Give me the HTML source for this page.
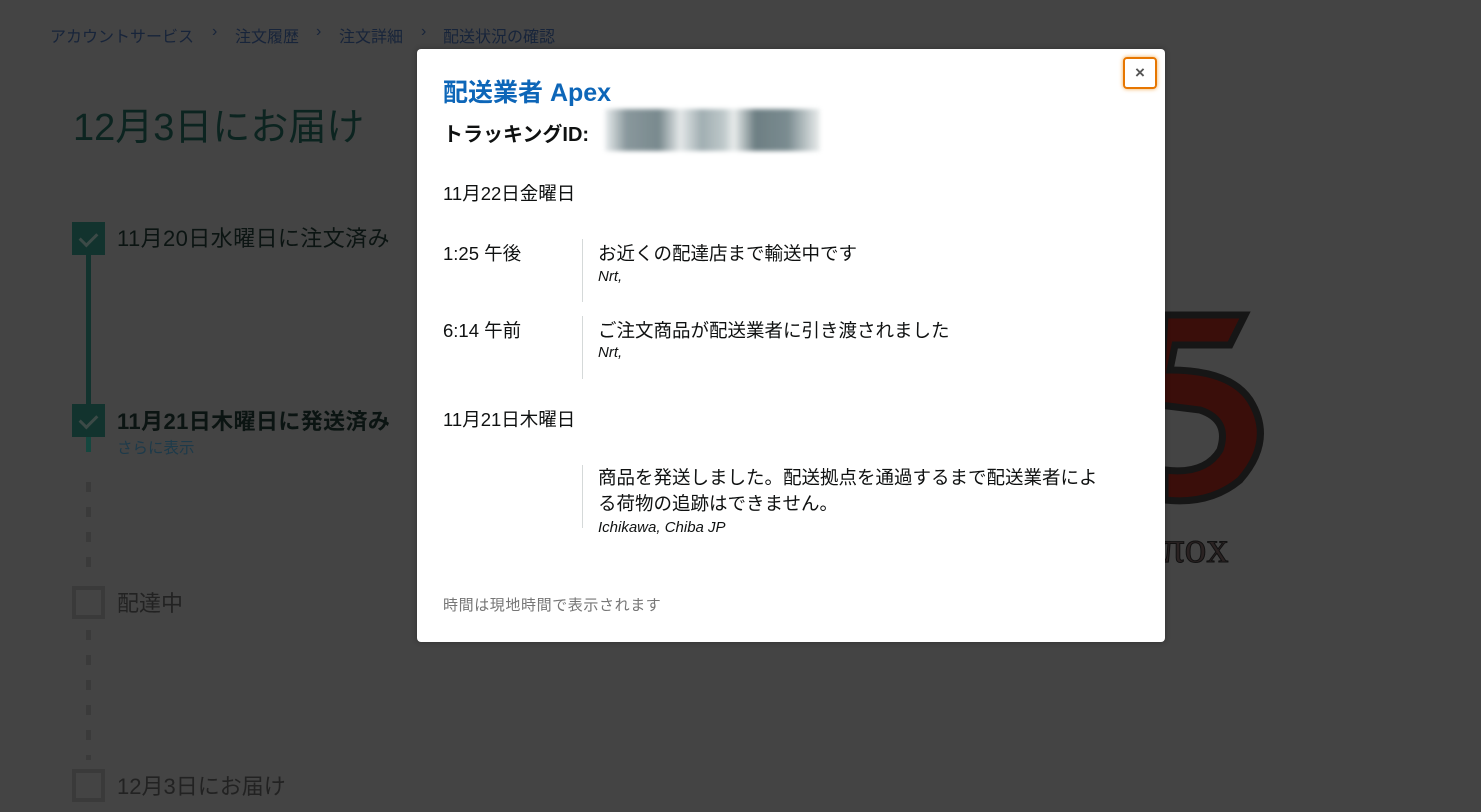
<!DOCTYPE html>
<html><head><meta charset="utf-8"><style>
*{margin:0;padding:0;box-sizing:border-box}
body{width:1481px;height:812px;overflow:hidden;background:#444;font-family:"Liberation Sans","Noto Sans CJK JP",sans-serif;position:relative;color:#111}
.a{position:absolute;white-space:nowrap}
.bc{top:23px;font-size:16px;color:#17243a}
.chk{position:absolute;left:72px;width:33px;height:33px;background:#12332e}
.chk:after{content:"";position:absolute;left:11px;top:7px;width:8px;height:14px;border:solid #3c4a47;border-width:0 3px 3px 0;transform:rotate(45deg)}
.emp{position:absolute;left:72px;width:33px;height:33px;border:4px solid #3a3a3a}
.dash{position:absolute;left:86px;width:5px;background:repeating-linear-gradient(#3a3a3a 0 10px,transparent 10px 25px)}
.modal{position:absolute;left:417px;top:49px;width:748px;height:593px;background:#fff;border-radius:4px;box-shadow:0 0 6px rgba(0,0,0,.3)}
.m{position:absolute;white-space:nowrap;color:#0f1111}
.vl{position:absolute;left:165px;width:1px;background:#d5d9d9}
.it{font-style:italic;font-size:15px}
.b{font-size:18.5px}
</style></head><body>
<div class="a bc" style="left:50px">アカウントサービス</div>
<div class="a bc" style="left:212px">›</div>
<div class="a bc" style="left:235px">注文履歴</div>
<div class="a bc" style="left:316px">›</div>
<div class="a bc" style="left:339px">注文詳細</div>
<div class="a bc" style="left:421px">›</div>
<div class="a bc" style="left:443px">配送状況の確認</div>
<div class="a" style="left:73px;top:96px;font-size:38px;color:#0c2420">12月3日にお届け</div>
<div style="position:absolute;left:86px;top:250px;width:5px;height:170px;background:#12332e"></div>
<div style="position:absolute;left:86px;top:436px;width:5px;height:16px;background:#15473f"></div>
<div class="chk" style="top:222px"></div>
<div class="chk" style="top:404px"></div>
<div class="a" style="left:117px;top:221px;font-size:22px;letter-spacing:.4px;color:#0b1412">11月20日水曜日に注文済み</div>
<div class="a" style="left:117px;top:404px;font-size:22px;letter-spacing:.4px;font-weight:bold;color:#0b1412">11月21日木曜日に発送済み</div>
<div class="a" style="left:117px;top:436px;font-size:15.5px;color:#1d3a4a">さらに表示</div>
<div class="dash" style="top:482px;height:95px"></div>
<div class="emp" style="top:586px"></div>
<div class="a" style="left:117px;top:586px;font-size:22px;color:#222">配達中</div>
<div class="dash" style="top:630px;height:130px"></div>
<div class="emp" style="top:769px"></div>
<div class="a" style="left:117px;top:769px;font-size:22px;color:#222">12月3日にお届け</div>
<svg style="position:absolute;left:1150px;top:300px" width="180" height="290" viewBox="0 0 180 290">
<path d="M15 15 L95 15 L80 45 L25 45 L20 70 Q80 70 100 100 Q125 140 90 180 Q60 205 15 200 L15 170 Q55 175 70 150 Q80 120 50 110 L10 105 Z" fill="#3a0e0a" stroke="#161616" stroke-width="7"/>
<text x="0" y="262" font-family="Liberation Serif,serif" font-size="44" fill="#2a2222" stroke="#111" stroke-width="1">ıπox</text>
</svg>
<div class="modal">
<div style="position:absolute;right:8px;top:8px;width:34px;height:32px;border:2px solid #e77600;border-radius:4px;box-shadow:0 0 4px #f0a94f;text-align:center;line-height:27px;font-size:17px;color:#555;font-weight:bold">×</div>
<div class="m" style="left:26px;top:24px;font-size:25px;font-weight:bold;color:#0d66b8">配送業者 Apex</div>
<div class="m" style="left:26px;top:69px;font-size:20px;font-weight:bold">トラッキングID:</div>
<div style="position:absolute;left:188px;top:60px;width:215px;height:42px;background:linear-gradient(90deg,#e8eced 0,#7d8d92 10%,#6b7d82 25%,#e2e6e7 35%,#97a6aa 45%,#b7c2c4 55%,#e6eaea 60%,#5e7176 70%,#6d8085 85%,#e9ecec 100%);filter:blur(2px);opacity:.9"></div>
<div class="m b" style="left:26px;top:131px">11月22日金曜日</div>
<div class="m b" style="left:26px;top:191px">1:25 午後</div>
<div class="vl" style="top:190px;height:63px"></div>
<div class="m b" style="left:181px;top:191px">お近くの配達店まで輸送中です</div>
<div class="m it" style="left:181px;top:219px">Nrt,</div>
<div class="m b" style="left:26px;top:268px">6:14 午前</div>
<div class="vl" style="top:267px;height:63px"></div>
<div class="m b" style="left:181px;top:268px">ご注文商品が配送業者に引き渡されました</div>
<div class="m it" style="left:181px;top:295px">Nrt,</div>
<div class="m b" style="left:26px;top:357px">11月21日木曜日</div>
<div class="vl" style="top:416px;height:63px"></div>
<div class="m b" style="left:181px;top:416px;line-height:26px">商品を発送しました。配送拠点を通過するまで配送業者によ<br>る荷物の追跡はできません。</div>
<div class="m it" style="left:181px;top:470px">Ichikawa, Chiba JP</div>
<div class="m" style="left:26px;top:545px;font-size:15px;letter-spacing:.6px;color:#767676">時間は現地時間で表示されます</div>
</div>
</body></html>
